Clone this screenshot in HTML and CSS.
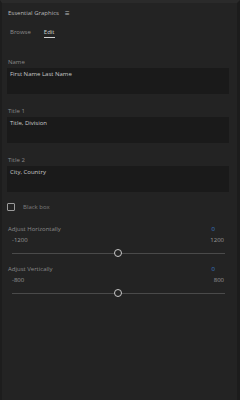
FILE: index.html
```html
<!DOCTYPE html>
<html>
<head>
    <title>Essential Graphics</title>
    <meta http-equiv="Content-Type" content="text/html; charset=utf-8" />
    <link rel="stylesheet" href="styles.css">
</head>

<body>
    <div class="panel">
        <!-- Cabeçalho do painel -->
        <div class="header">
            <span class="title">Essential Graphics</span>
            <span class="menu">&#8801;</span>
        </div>
        <div class="tabs">
            <span class="tab">Browse</span>
            <span class="tab active">Edit</span>
        </div>

        <!-- Campos de texto -->
        <div class="field">
            <div class="label">Name</div>
            <div class="box">First Name Last Name</div>
        </div>
        <div class="field">
            <div class="label">Title 1</div>
            <div class="box">Title, Division</div>
        </div>
        <div class="field">
            <div class="label">Title 2</div>
            <div class="box">City, Country</div>
        </div>

        <div class="check">
            <span class="checkbox"></span>
            <span class="label">Black box</span>
        </div>

        <!-- Sliders -->
        <div class="slider">
            <div class="row">
                <span class="label">Adjust Horizontally</span>
                <span class="value">0</span>
            </div>
            <div class="row range">
                <span>-1200</span>
                <span>1200</span>
            </div>
            <div class="track"><span class="thumb"></span></div>
        </div>
        <div class="slider">
            <div class="row">
                <span class="label">Adjust Vertically</span>
                <span class="value">0</span>
            </div>
            <div class="row range">
                <span>-800</span>
                <span>800</span>
            </div>
            <div class="track"><span class="thumb"></span></div>
        </div>
    </div>
</body>

</html>
```

FILE: styles.css
```css
body {
    margin: 0;
    background-color: #232323;
    font-family: "Open Sans", "Noto Sans", sans-serif;
    font-size: 6px;
    line-height: 8px;
    color: #bdbdbd;
}

.panel {
    height: 400px;
    box-sizing: border-box;
    padding: 0 8px 0 5px;
    border-top: 3px solid #2a2a2a;
    border-left: 2px solid #1d1d1d;
    border-right: 3px solid #1c1c1c;
}

.header {
    display: flex;
    gap: 6px;
    padding-top: 6px;
    padding-left: 1px;
}

.title {
    color: #b8b8b8;
}

.menu {
    color: #b8b8b8;
    font-size: 8px;
}

.tabs {
    display: flex;
    gap: 13px;
    margin-top: 11px;
    padding-left: 3px;
}

.tab {
    color: #8c8c8c;
    padding-bottom: 1px;
}

.tab.active {
    color: #d0d0d0;
    border-bottom: 1px solid #d0d0d0;
}

.field {
    margin-top: 20px;
}

.field + .field {
    margin-top: 13px;
}

.label {
    color: #8a8a8a;
    padding-left: 1px;
}

.box {
    margin-top: 2px;
    height: 26px;
    box-sizing: border-box;
    padding: 2px 3px;
    background-color: #1a1a1a;
    color: #c8c8c8;
}

.check {
    display: flex;
    align-items: center;
    gap: 7px;
    margin-top: 11px;
    height: 8px;
}

.check .label {
    color: #7e7e7e;
}

.checkbox {
    width: 6px;
    height: 6px;
    border: 1px solid #9a9a9a;
    border-radius: 1px;
}

.slider {
    margin-top: 14px;
}

.slider + .slider {
    margin-top: 11px;
}

.row {
    display: flex;
    justify-content: space-between;
}

.value {
    color: #3a7fd0;
    padding-right: 14px;
}

.range {
    margin-top: 3px;
    padding: 0 5px 0 5px;
    color: #9a9a9a;
}

.track {
    position: relative;
    margin: 9px 4px 0 5px;
    height: 1px;
    background-color: #4a4a4a;
}

.thumb {
    position: absolute;
    left: 50%;
    top: -4px;
    margin-left: -4.5px;
    width: 6px;
    height: 6px;
    border: 1.5px solid #c8c8c8;
    border-radius: 50%;
    background-color: #232323;
}
```
